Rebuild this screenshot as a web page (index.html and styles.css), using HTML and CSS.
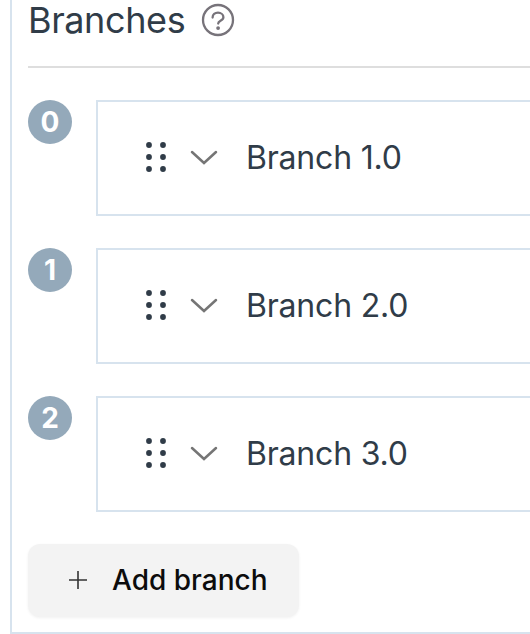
FILE: index.html
```html
<!DOCTYPE html>
<html lang="en">
<head>
<meta charset="utf-8">
<title>Branches</title>
<link rel="stylesheet" href="styles.css">
</head>
<body>
<svg class="defs" width="0" height="0" aria-hidden="true">
  <symbol id="grip" viewBox="0 0 20 30">
    <circle cx="3" cy="3" r="2.900"/><circle cx="17" cy="3" r="2.900"/>
    <circle cx="3" cy="15" r="2.900"/><circle cx="17" cy="15" r="2.900"/>
    <circle cx="3" cy="27" r="2.900"/><circle cx="17" cy="27" r="2.900"/>
  </symbol>
  <symbol id="chevron" viewBox="0 0 28 16">
    <path d="M2 3 14 14 26 3" fill="none" stroke="currentColor" stroke-width="2.500" stroke-linecap="round"/>
  </symbol>
</svg>
<main class="panel">
  <header class="heading">
    <h1>Branches</h1>
    <svg class="help" viewBox="0 0 34 34">
      <circle cx="17" cy="17" r="15"/>
      <path d="M11.600 14.600C11.600 11.500 14 9.700 17 9.700S22.400 11.700 22.400 14.200C22.400 18 17.200 17.600 17.200 20.500"/>
      <circle class="dot" cx="17.100" cy="25.100" r="1.900"/>
    </svg>
  </header>
  <section class="list">
    <div class="row"><span class="badge">0</span><div class="card"><svg class="grip"><use href="#grip"/></svg><svg class="chevron"><use href="#chevron"/></svg><span class="name">Branch 1.0</span></div></div>
    <div class="row"><span class="badge">1</span><div class="card"><svg class="grip"><use href="#grip"/></svg><svg class="chevron"><use href="#chevron"/></svg><span class="name">Branch 2.0</span></div></div>
    <div class="row"><span class="badge">2</span><div class="card"><svg class="grip"><use href="#grip"/></svg><svg class="chevron"><use href="#chevron"/></svg><span class="name">Branch 3.0</span></div></div>
  </section>
  <button class="add"><svg class="plus" viewBox="0 0 20 20"><path d="M10 1v18M1 10h18"/></svg><span>Add branch</span></button>
</main>
</body>
</html>
```
FILE: styles.css
```css
* { box-sizing: border-box; }
body { margin: 0; height: 634px; overflow: hidden; background: #fff; font-family: Inter, sans-serif; color: #303c48; }
.defs { display: block; }
.panel { margin-left: 10px; height: 634px; padding-left: 16px; border-left: 2px solid #d7e3ee; border-bottom: 2px solid #d7e3ee; }
.heading { display: flex; align-items: flex-start; height: 68px; border-bottom: 2px solid #dedede; }
h1 { width: 173px; margin: 0; font-size: 36px; line-height: 40px; font-weight: 400; letter-spacing: -0.4px; }
.help { width: 34px; height: 34px; margin-top: 3px; fill: none; stroke: #77737a; stroke-width: 2.3; stroke-linecap: round; }
.help .dot { fill: #77737a; stroke: none; }
.list { display: flex; flex-direction: column; gap: 32px; margin-top: 32px; }
.row { display: flex; align-items: flex-start; gap: 24px; height: 116px; }
.badge { width: 44px; height: 44px; border-radius: 50%; background: #94a9ba; color: #fff; font-size: 28px; line-height: 44px; font-weight: 700; text-align: center; }
.card { flex: 1; height: 116px; display: flex; align-items: center; padding: 0 0 2px 48px; border: 2px solid #d7e3ee; border-right: 0; font-size: 32px; letter-spacing: -0.2px; }
.name { margin-top: 1px; line-height: 39px; }
.grip { width: 20px; height: 30px; fill: #303c48; }
.chevron { width: 28px; height: 16px; margin: 0 28px 0 24px; color: #757575; }
.add { display: flex; align-items: center; width: 271px; height: 73px; margin-top: 32px; padding: 0 0 1px 40px; gap: 24px; border: 0; border-radius: 12px; background: #f3f3f3; box-shadow: 0 1px 3px rgba(0, 0, 0, 0.06); color: #0c0c0c; font: 500 28px/36px Inter, sans-serif; }
.plus { width: 20px; height: 20px; fill: none; stroke: #333; stroke-width: 1.6; }
```
